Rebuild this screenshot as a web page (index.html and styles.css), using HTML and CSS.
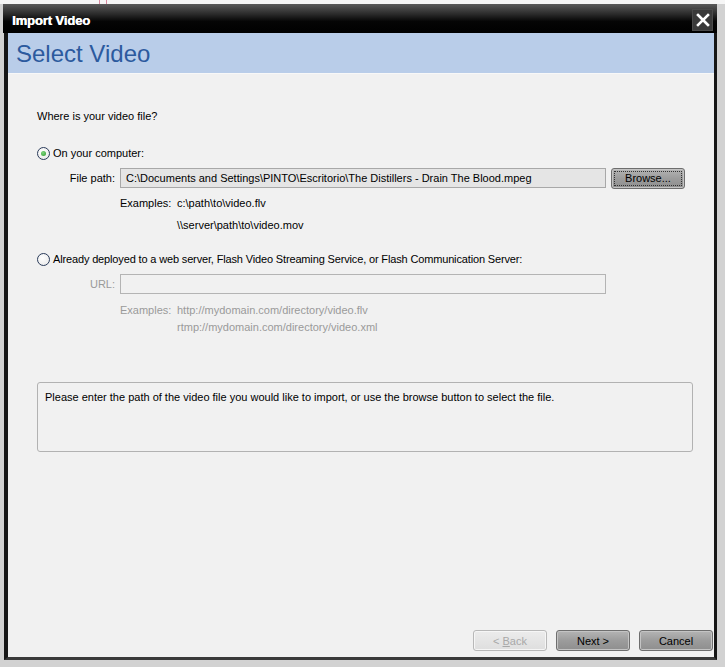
FILE: index.html
```html
<!DOCTYPE html>
<html>
<head>
<meta charset="utf-8">
<link rel="stylesheet" href="styles.css">
</head>
<body>
<div class="topstrip"><span class="mark"></span></div>
<div class="window">
  <div class="titlebar">
    <span class="title">Import Video</span>
    <span class="close">
      <svg width="14" height="14" viewBox="0 0 14 14"><path d="M2 2 L12 12 M12 2 L2 12" stroke="#fff" stroke-width="2.6" stroke-linecap="square"/></svg>
    </span>
  </div>
  <div class="header">Select Video</div>
  <div class="content">
    <div class="question">Where is your video file?</div>

    <div class="radio-row r1">
      <span class="radio checked"><span class="dot"></span></span>
      <span>On your computer:</span>
    </div>
    <div class="field-row">
      <span class="flabel">File path:</span>
      <div class="input filled">C:\Documents and Settings\PINTO\Escritorio\The Distillers - Drain The Blood.mpeg</div>
      <button class="btn browse"><span class="focus">Browse...</span></button>
    </div>
    <div class="ex-row">
      <span class="flabel ex">Examples:</span>
      <span>c:\path\to\video.flv</span>
    </div>
    <div class="ex-row second">
      <span class="flabel ex"></span>
      <span>\\server\path\to\video.mov</span>
    </div>

    <div class="radio-row r2">
      <span class="radio"></span>
      <span class="long">Already deployed to a web server, Flash Video Streaming Service, or Flash Communication Server:</span>
    </div>
    <div class="field-row url disabled">
      <span class="flabel">URL:</span>
      <div class="input empty"></div>
    </div>
    <div class="ex-row disabled ex-url">
      <span class="flabel ex">Examples:</span>
      <span>http://mydomain.com/directory/video.flv</span>
    </div>
    <div class="ex-row disabled second2">
      <span class="flabel ex"></span>
      <span>rtmp://mydomain.com/directory/video.xml</span>
    </div>

    <div class="message">Please enter the path of the video file you would like to import, or use the browse button to select the file.</div>

    <div class="spacer"></div>
    <div class="buttons">
      <button class="btn nav back" disabled>&lt; <u>B</u>ack</button>
      <button class="btn nav">Next &gt;</button>
      <button class="btn nav">Cancel</button>
    </div>
  </div>
</div>
</body>
</html>
```
FILE: styles.css
```css
html, body {
  margin: 0;
  padding: 0;
}
body {
  width: 725px;
  height: 667px;
  background: #d2d2d2;
  font-family: "Liberation Sans", Arial, sans-serif;
  font-size: 11px;
  color: #000;
  overflow: hidden;
}
.topstrip {
  height: 4px;
  background: #f6f6f6;
  display: flex;
}
.mark {
  margin-left: 99px;
  width: 6px;
  height: 4px;
  border-left: 1px solid #d88aa0;
  border-right: 1px solid #d88aa0;
}
.window {
  margin-left: 4px;
  width: 706px;
  height: 653px;
  border-left: 4px solid #161616;
  border-right: 3px solid #161616;
  border-bottom: 3px solid #3a3a3a;
  background: #f1f1f1;
  display: flex;
  flex-direction: column;
}
.titlebar {
  margin-left: -5px;
  margin-right: -3px;
  height: 29px;
  background: linear-gradient(#5a5a5a 0%, #2a2a2a 35%, #050505 60%, #000 100%);
  display: flex;
  align-items: center;
  justify-content: space-between;
  padding: 0 4px 0 9px;
}
.title {
  color: #fff;
  font-weight: bold;
  font-size: 13px;
  letter-spacing: -0.1px;
  padding-top: 3px;
  text-shadow: 0.4px 0 0 #fff;
}
.close {
  width: 19px;
  height: 20px;
  margin-top: 2px;
  background: #3a3a3a;
  border: 1px solid #4a4a4a;
  display: flex;
  align-items: center;
  justify-content: center;
}
.header {
  height: 40px;
  background: #b9cde9;
  color: #2c5a9e;
  font-size: 24px;
  padding-left: 8px;
  line-height: 42px;
  border-bottom: 1px solid #f8f8f8;
}
.content {
  flex: 1;
  display: flex;
  flex-direction: column;
  padding-left: 29px;
}
.question {
  margin-top: 35px;
  height: 14px;
  line-height: 14px;
}
.radio-row {
  display: flex;
  align-items: center;
  gap: 3px;
  height: 14px;
}
.r1 { margin-top: 23px; }
.r2 { margin-top: 20px; }
.long { letter-spacing: -0.15px; }
.radio {
  width: 11px;
  height: 11px;
  border: 1px solid #2a3b5a;
  border-radius: 50%;
  background: radial-gradient(circle at 40% 35%, #ffffff, #e6e6e6);
  display: flex;
  align-items: center;
  justify-content: center;
}
.dot {
  width: 5px;
  height: 5px;
  border-radius: 50%;
  background: radial-gradient(circle at 40% 35%, #7ed67e, #2f9a2f);
}
.field-row {
  display: flex;
  align-items: center;
  height: 20px;
  margin-top: 8px;
}
.url { margin-top: 8px; }
.flabel {
  width: 78px;
  text-align: right;
  padding-right: 5px;
  flex: none;
}
.input {
  width: 479px;
  height: 18px;
  border: 1px solid #a8a8a8;
  box-sizing: content-box;
  line-height: 18px;
  padding-left: 5px;
  white-space: nowrap;
  overflow: hidden;
}
.filled { background: #e5e5e5; }
.empty { background: #f1f1f1; border-color: #b4b4b4; }
.btn {
  font-family: "Liberation Sans", Arial, sans-serif;
  font-size: 11px;
  color: #000;
  border: 1px solid #6e6e6e;
  border-radius: 3px;
  background: linear-gradient(#b4b4b4, #9c9c9c 50%, #8e8e8e);
  box-shadow: inset 0 0 0 1px #c4c4c4;
  padding: 0;
  margin: 0;
}
.browse {
  margin-left: 5px;
  width: 74px;
  height: 21px;
  padding: 2px;
  display: flex;
}
.focus {
  flex: 1;
  border: 1px dotted #333;
  display: flex;
  align-items: center;
  justify-content: center;
}
.ex-row {
  display: flex;
  height: 14px;
  line-height: 14px;
  margin-top: 8px;
}
.ex-row.second { margin-top: 8px; }
.ex-row.ex-url { margin-top: 9px; }
.ex-row.second2 { margin-top: 3px; }
.flabel.ex {
  width: 140px;
  text-align: left;
  padding-left: 83px;
  padding-right: 0;
  box-sizing: border-box;
}
.disabled { color: #9a9a9a; }
.message {
  margin-top: 48px;
  width: 647px;
  height: 60px;
  border: 1px solid #b2b2b2;
  border-radius: 3px;
  padding: 8px 0 0 7px;
  box-sizing: content-box;
}
.spacer { flex: 1; }
.buttons {
  display: flex;
  justify-content: flex-end;
  gap: 9px;
  padding-right: 1px;
  margin-bottom: 6px;
}
.nav {
  width: 74px;
  height: 21px;
}
.back {
  background: linear-gradient(#ececec, #dedede);
  border-color: #b8b8b8;
  color: #a8a8a8;
  box-shadow: inset 0 0 0 1px #f6f6f6;
}
```
